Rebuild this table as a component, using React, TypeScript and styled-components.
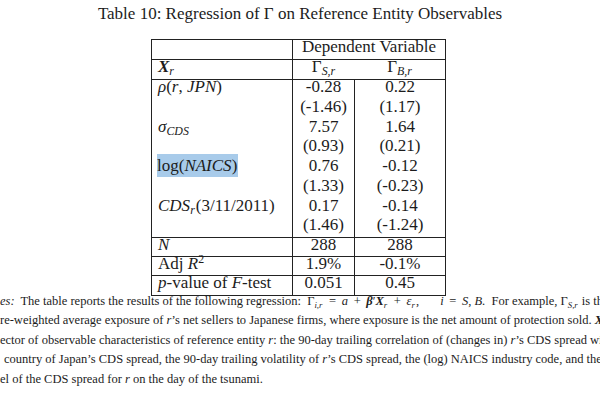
import React from "react";
import styled, { createGlobalStyle } from "styled-components";

const Global = createGlobalStyle`
  html, body { margin: 0; padding: 0; background: #ffffff; }
  body {
    width: 600px; height: 400px; overflow: hidden;
    font-family: "Liberation Serif", "Times New Roman", serif;
    color: #1c1c1c;
  }
`;

const Page = styled.div`
  width: 600px;
  height: 400px;
  display: flex;
  flex-direction: column;
  overflow: hidden;
`;

const Title = styled.div`
  padding-top: 4px;
  font-size: 17px;
  line-height: 20px;
  text-align: center;
`;

const Grid = styled.div`
  margin: 15px 0 0 151px;
  display: grid;
  grid-template-columns: 141px 62px 91px;
  grid-template-rows: 20px 20px repeat(8, 19.75px) 19px 19px 20px;
  width: max-content;
  border-top: 1px solid #222;
  border-left: 1px solid #222;
  font-size: 17px;
`;

const Cell = styled.div<{ $right?: boolean; $bottom?: boolean; $center?: boolean; $span?: number }>`
  box-sizing: border-box;
  border-right: ${(p) => (p.$right ? "1px solid #222" : "none")};
  border-bottom: ${(p) => (p.$bottom ? "1px solid #222" : "none")};
  text-align: ${(p) => (p.$center ? "center" : "left")};
  grid-column: ${(p) => (p.$span ? `span ${p.$span}` : "auto")};
  padding: 0 ${(p) => (p.$center ? "0" : "6px")};
  line-height: 13px;
  white-space: nowrap;
`;

const I = styled.i`
  font-style: italic;
`;

const BI = styled.b`
  font-style: italic;
  font-weight: bold;
`;

const Sub = styled.sub`
  font-size: 70%;
  font-style: italic;
  vertical-align: -3px;
  line-height: 0;
  padding-right: 1px;
`;

const Sup = styled.sup`
  font-size: 70%;
  vertical-align: 6px;
  line-height: 0;
`;

const Highlight = styled.span`
  background: #a8cbea;
  padding: 2px 1px 2px 0;
  margin-left: -1px;
`;

const Notes = styled.div`
  margin-top: -4px;
  font-size: 12.5px;
  line-height: 19.4px;
  display: flex;
  flex-direction: column;
`;

const NoteLine = styled.div<{ $indent?: number }>`
  white-space: nowrap;
  overflow: hidden;
  padding-left: ${(p) => p.$indent ?? 0}px;
`;

const Lead = styled.i`
  font-style: italic;
  margin-right: 3px;
`;

const Op = styled.span`
  padding: 0 2.5px;
`;

const Gap = styled.span`
  display: inline-block;
  width: 18px;
`;

type Row = { label: React.ReactNode; a: string; b: string; last?: boolean };

const dataRows: Row[] = [
  {
    label: (
      <>
        <I>ρ</I>(<I>r</I>, <I>JPN</I>)
      </>
    ),
    a: "-0.28",
    b: "0.22",
  },
  { label: "", a: "(-1.46)", b: "(1.17)" },
  {
    label: (
      <>
        <I>σ</I>
        <Sub>CDS</Sub>
      </>
    ),
    a: "7.57",
    b: "1.64",
  },
  { label: "", a: "(0.93)", b: "(0.21)" },
  {
    label: (
      <Highlight>
        log(<I>NAICS</I>)
      </Highlight>
    ),
    a: "0.76",
    b: "-0.12",
  },
  { label: "", a: "(1.33)", b: "(-0.23)" },
  {
    label: (
      <>
        <I>CDS</I>
        <Sub>r</Sub>(3/11/2011)
      </>
    ),
    a: "0.17",
    b: "-0.14",
  },
  { label: "", a: "(1.46)", b: "(-1.24)", last: true },
];

const statRows: Row[] = [
  { label: <I>N</I>, a: "288", b: "288" },
  {
    label: (
      <>
        Adj <I>R</I>
        <Sup>2</Sup>
      </>
    ),
    a: "1.9%",
    b: "-0.1%",
  },
  {
    label: (
      <>
        <I>p</I>-value of <I>F</I>-test
      </>
    ),
    a: "0.051",
    b: "0.45",
  },
];

export default function App() {
  return (
    <Page>
      <Global />
      <Title>Table 10: Regression of Γ on Reference Entity Observables</Title>
      <Grid>
        <Cell $right $bottom />
        <Cell $right $bottom $center $span={2}>
          Dependent Variable
        </Cell>

        <Cell $right $bottom>
          <BI>X</BI>
          <Sub>r</Sub>
        </Cell>
        <Cell $bottom $center>
          Γ<Sub>S,r</Sub>
        </Cell>
        <Cell $right $bottom $center>
          Γ<Sub>B,r</Sub>
        </Cell>

        {dataRows.map((r, i) => (
          <React.Fragment key={`d${i}`}>
            <Cell $right $bottom={r.last}>
              {r.label}
            </Cell>
            <Cell $right $bottom={r.last} $center>
              {r.a}
            </Cell>
            <Cell $right $bottom={r.last} $center>
              {r.b}
            </Cell>
          </React.Fragment>
        ))}

        {statRows.map((r, i) => (
          <React.Fragment key={`s${i}`}>
            <Cell $right $bottom>
              {r.label}
            </Cell>
            <Cell $right $bottom $center>
              {r.a}
            </Cell>
            <Cell $right $bottom $center>
              {r.b}
            </Cell>
          </React.Fragment>
        ))}
      </Grid>
      <Notes>
        <NoteLine>
          <Lead>es:</Lead> The table reports the results of the following regression:&nbsp; Γ<Sub>i,r</Sub>{" "}
          <Op>=</Op> <I>a</I> <Op>+</Op> <BI>β</BI>′<BI>X</BI>
          <Sub>r</Sub> <Op>+</Op> <I>ε</I>
          <Sub>r</Sub>,<Gap /> <I>i</I> <Op>=</Op> <I>S, B</I>.&nbsp; For example, Γ<Sub>S,r</Sub> is the
        </NoteLine>
        <NoteLine>
          re-weighted average exposure of <I>r</I>’s net sellers to Japanese firms, where exposure is the net amount
          of protection sold. <BI>X</BI>
          <Sub>r</Sub> is a
        </NoteLine>
        <NoteLine>
          ector of observable characteristics of reference entity <I>r</I>: the 90-day trailing correlation of
          (changes in) <I>r</I>’s CDS spread with
        </NoteLine>
        <NoteLine $indent={4}>
          country of Japan’s CDS spread, the 90-day trailing volatility of <I>r</I>’s CDS spread, the (log) NAICS
          industry code, and the
        </NoteLine>
        <NoteLine>
          el of the CDS spread for <I>r</I> on the day of the tsunami.
        </NoteLine>
      </Notes>
    </Page>
  );
}
